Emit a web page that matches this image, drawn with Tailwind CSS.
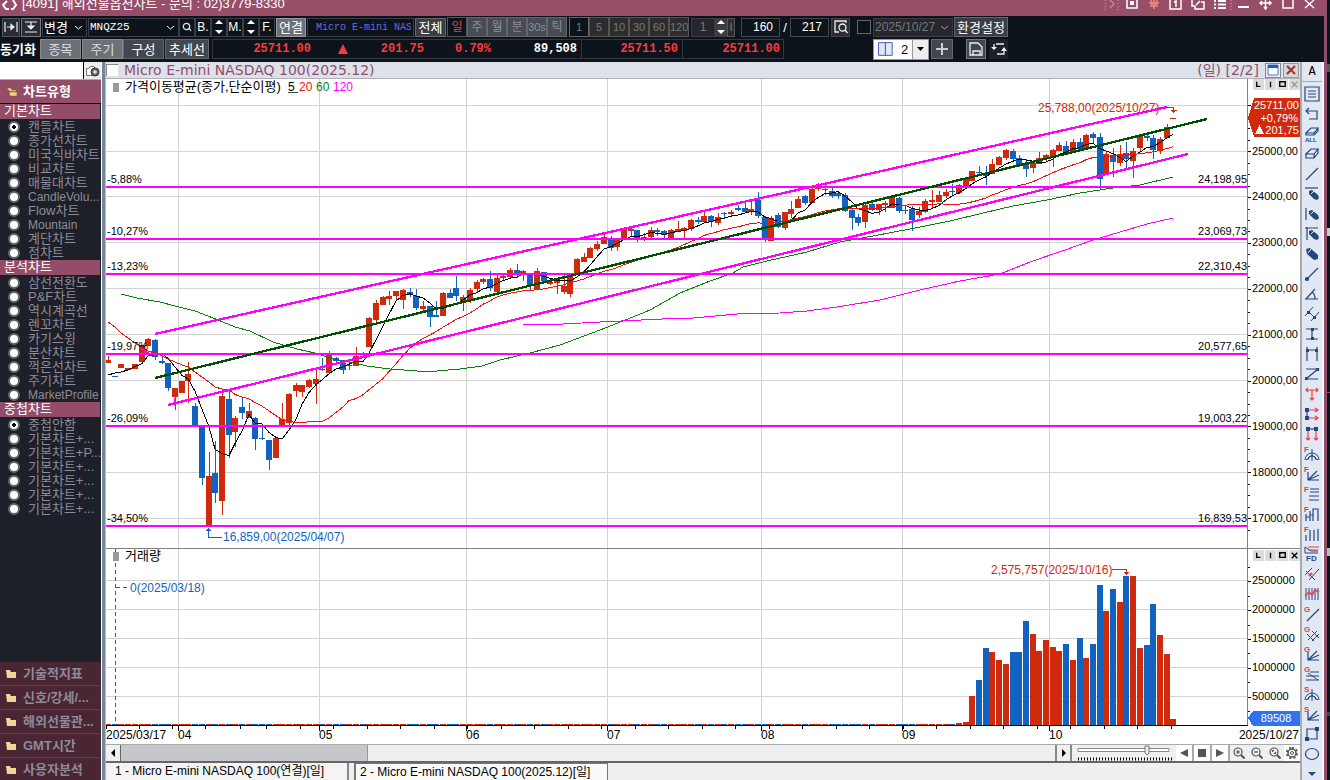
<!DOCTYPE html>
<html lang="ko">
<head>
  <meta charset="UTF-8" />
  <meta name="viewport" content="width=device-width, initial-scale=1.0"/>
  <title>[4091] 해외선물옵션차트</title>
  <script src="https://cdn.jsdelivr.net/npm/@tailwindcss/browser@4"></script>
</head>
<body class="h-screen flex overflow-hidden bg-[#12161d] text-[13px] font-['Liberation_Sans','Noto_Sans_CJK_KR',sans-serif]">

  <div class="flex-1 min-w-0 h-full flex flex-col border-r-3 border-[#8f4d69]">

    <!-- Title bar -->
    <header class="h-4 shrink-0 flex items-end justify-between bg-[#964e69] text-white overflow-hidden">
      <div class="flex items-end gap-1 pl-[2px]">
        <svg class="w-4 h-4" viewBox="0 0 16 16" fill="none" stroke="#fff" stroke-width="2"><path d="M5 1 1 5l3 4h3M11 0l3 5-3 4H9"/></svg>
        <h1 class="text-[13px] leading-4 h-5 whitespace-nowrap">[4091] 해외선물옵션차트 - 문의 : 02)3779-8330</h1>
      </div>
      <svg class="w-[220px] h-4" viewBox="0 0 220 16" fill="none" stroke="#fff" stroke-width="1.5">
        <path stroke="#b98a9b" stroke-dasharray="1 2" d="M1.500 0v12M14 0v12M127 0v12"/>
        <path stroke="#b98a9b" d="m6 0 4 4-4 4"/>
        <path d="M23 0v8h10V0M66 0v9h11V0M70 2l2-1v6M88 0v6h3v3h9V2h-3M92 5l4-4"/>
        <path fill="#fff" stroke="none" d="M26 1h4v4h-4z"/>
        <path stroke="#f08c78" d="M45 3h10M47 0l1 5M53 0l-1 5M50 0v9M46 6h8"/>
        <path stroke-width="2" d="M110 1h2M110 4.500h2M110 8h2M114 1h8M114 4.500h8M114 8h8M134 7h11"/>
        <path d="M156 3h11M161.500 0v9M158 1l-2 2 2 2M165 1l2 2-2 2M160 7l1.500 2 1.500-2M179 0v8h10V0M201 0l9 8M210 0l-9 8"/>
      </svg>
    </header>

    <!-- Toolbars -->
    <div class="h-[46px] shrink-0 bg-[#0d131b] text-white leading-none overflow-hidden whitespace-nowrap">
      <div class="flex items-center h-[21px] pl-[2px] pt-px">
        <button aria-label="간격" class="w-[18px] h-[19px] mr-px bg-[#2a2d36] border border-[#50535a] grid place-items-center"><svg class="w-3.5 h-3" viewBox="0 0 14 12" fill="none" stroke="#eee" stroke-width="1.200"><path d="M1 1v10M13 1v10M3 6h6"/><path fill="#eee" d="m7 3.500 3 2.500-3 2.500z"/></svg></button>
        <button aria-label="높이" class="w-5 h-[19px] mr-px bg-[#2a2d36] border border-[#777a80] grid place-items-center"><svg class="w-3.5 h-3" viewBox="0 0 14 12" fill="none" stroke="#eee" stroke-width="1.200"><path d="M1 1h12M1 11h12M7 1v5"/><path fill="#eee" d="m4 5 3 3 3-3z"/></svg></button>
        <div class="relative w-[45px] h-[19px] mr-px border border-[#3a3d44]">
          <select aria-label="변경" class="appearance-none w-full h-full pl-px outline-none bg-transparent"><option>변경</option></select>
          <svg class="absolute right-1 top-[7px] w-[7px] h-1" viewBox="0 0 7 4" fill="none" stroke="#fff"><path d="m0 0 3.500 3L7 0"/></svg>
        </div>
        <div class="relative w-[91px] h-[19px] border border-[#3a3d44]">
          <select aria-label="종목코드" class="appearance-none w-full h-full pl-px outline-none bg-transparent text-[11px] font-['Liberation_Mono',monospace]"><option>MNQZ25</option></select>
          <svg class="absolute right-1 top-[7px] w-[7px] h-1" viewBox="0 0 7 4" fill="none" stroke="#fff"><path d="m0 0 3.500 3L7 0"/></svg>
        </div>
        <button aria-label="종목 찾기" class="w-4 h-[19px] border border-[#3a3d44] grid place-items-center"><svg class="w-2.5 h-2.5" viewBox="0 0 10 10" fill="none" stroke="#ddd" stroke-width="1.300"><circle cx="4.500" cy="4.500" r="3.200"/><path d="m7 6 2 3"/></svg></button>
        <button class="w-4 h-[19px] border border-[#3a3d44] text-[12px]">B.</button>
        <button aria-label="B 변경" class="w-4 h-[19px] border border-[#3a3d44] grid place-items-center"><svg class="w-2 h-3.5" viewBox="0 0 8 14" fill="#fff"><path d="M0 4h8L4 0zM0 10h8l-4 4z"/></svg></button>
        <button class="w-4 h-[19px] border border-[#3a3d44] text-[12px]">M.</button>
        <button aria-label="M 변경" class="w-4 h-[19px] border border-[#3a3d44] grid place-items-center"><svg class="w-2 h-3.5" viewBox="0 0 8 14" fill="#fff"><path d="M0 4h8L4 0zM0 10h8l-4 4z"/></svg></button>
        <button class="w-4 h-[19px] mr-px border border-[#3a3d44] text-[12px]">F.</button>
        <button class="w-[30px] h-[19px] mr-px bg-[#6c7078] border border-[#999]">연결</button>
        <input aria-label="종목명" readonly value=" Micro E-mini NASDAQ" class="w-[107px] h-[19px] mr-px pl-[2px] pr-[2px] border border-[#3a3d44] text-[#7468dc] font-['Liberation_Mono',monospace] text-[10px]"/>
        <button class="w-[31px] h-[19px] mr-px bg-[#3a3d45] border border-[#666]">전체</button>
        <div class="flex mr-[2px] text-[#8c8e92] text-[12px]">
          <button class="w-5 h-5 border border-[#555] bg-[#0d131b] text-[#f43c3c]">일</button>
          <button class="w-5 h-5 border border-[#666] bg-[#474b53]">주</button>
          <button class="w-5 h-5 border border-[#666] bg-[#474b53]">월</button>
          <button class="w-5 h-5 border border-[#666] bg-[#474b53]">분</button>
          <button class="w-5 h-5 border border-[#666] bg-[#474b53] text-[11px]">30s</button>
          <button class="w-5 h-5 border border-[#666] bg-[#474b53]">틱</button>
        </div>
        <div class="flex mr-[2px] text-[#77797c] text-[11px]">
          <button class="w-5 h-5 border border-[#666] bg-[#0d131b]">1</button>
          <button class="w-5 h-5 border border-[#555] bg-[#2c2c2f]">5</button>
          <button class="w-5 h-5 border border-[#555] bg-[#2c2c2f]">10</button>
          <button class="w-5 h-5 border border-[#555] bg-[#2c2c2f]">30</button>
          <button class="w-5 h-5 border border-[#555] bg-[#2c2c2f]">60</button>
          <button class="w-5 h-5 border border-[#555] bg-[#2c2c2f]">120</button>
        </div>
        <input aria-label="틱 단위" disabled value="1" class="w-6 h-[19px] bg-[#26262b] border border-[#3a3d44] text-[#77797c] text-[12px] text-center"/>
        <button aria-label="단위 변경" class="w-3 h-[19px] bg-[#3c3d40] grid place-items-center"><svg class="w-2 h-3.5" viewBox="0 0 8 14" fill="#fff"><path d="M0 4h8L4 0zM0 10h8l-4 4z"/></svg></button>
        <button class="w-2 h-[19px] mr-[6px] bg-[#2c2c2f] border border-[#555] text-[#77797c] text-[11px]">I</button>
        <input aria-label="표시 봉수" value="160" class="w-[39px] h-[19px] pr-[6px] border border-[#44474d] text-[12px] text-right"/>
        <span class="w-[10px] text-center">/</span>
        <input aria-label="전체 봉수" value="217" class="w-[39px] h-[19px] mr-[2px] pr-[6px] border border-[#44474d] text-[12px] text-right"/>
        <button aria-label="데이터 조회" class="w-[19px] h-[19px] mr-[7px] bg-[#2a2d33] border border-[#444] grid place-items-center"><svg class="w-3.5 h-3.5" viewBox="0 0 14 14" fill="none" stroke="#eee" stroke-width="1.300"><path d="M12 3V1H1v11h4"/><circle cx="8.500" cy="7.500" r="3.500"/><path d="m11 10 2.500 3"/></svg></button>
        <input aria-label="날짜 지정" type="checkbox" class="appearance-none w-3.5 h-3.5 mr-[2px] border border-[#666]"/>
        <div class="relative w-20 h-[19px] mr-px bg-[#26262b] border border-[#3a3d44]">
          <select aria-label="기준일" disabled class="appearance-none w-full h-full pl-px text-[#77797c] text-[12px] opacity-100"><option>2025/10/27</option></select>
          <svg class="absolute right-1 top-[7px] w-[7px] h-1" viewBox="0 0 7 4" fill="none" stroke="#aaa"><path d="m0 0 3.500 3L7 0"/></svg>
        </div>
        <button class="w-[54px] h-5 bg-[#3a3d45] border border-[#666]">환경설정</button>
      </div>

      <div class="flex items-center h-[23px] pt-px">
        <span class="w-[40px] font-bold">동기화</span>
        <button class="w-[41px] h-5 mr-px bg-[#6c7078] border border-[#888] text-[#ddd]">종목</button>
        <button class="w-[41px] h-5 bg-[#6c7078] border border-[#888] text-[#ddd]">주기</button>
        <button class="w-[41px] h-5 mr-px bg-[#42464e] border border-[#666]">구성</button>
        <button class="w-11 h-5 mr-[3px] bg-[#42464e] border border-[#666]">추세선</button>
        <div class="flex w-[572px] mr-[89px] h-5 border border-[#34373d] items-center font-bold font-['Liberation_Mono',monospace] text-[12px] text-[#f83c3c]">
          <span class="w-[98px] text-right">25711.00</span>
          <svg class="w-2.5 h-2.5 ml-[27px]" viewBox="0 0 10 10" fill="#f83c3c"><path d="M5 0 10 10H0z"/></svg>
          <span class="w-[76px] text-right">201.75</span>
          <span class="w-[67px] text-right">0.79%</span>
          <span class="w-[91px] h-full pr-1 flex items-center justify-end border-r border-[#34373d] text-white">89,508</span>
          <span class="w-[101px] h-full pr-1 flex items-center justify-end border-r border-[#34373d]">25711.50</span>
          <span class="w-[100px] text-right pr-[3px]">25711.00</span>
        </div>
        <div class="flex w-14 h-[21px] mr-[2px] bg-white border border-[#999] text-black items-center">
          <svg class="w-[15px] h-3.5 mx-1" viewBox="0 0 15 14"><path d="M.5.5h14v13H.5z" fill="#dfe9f3" stroke="#5c50c8"/><path d="M7.500 0v14" stroke="#1263c0"/></svg>
          <span class="w-4 text-center">2</span>
          <button aria-label="분할 선택" class="w-4 h-full bg-[#eee] border-l border-[#999] grid place-items-center"><svg class="w-[7px] h-1" viewBox="0 0 7 4"><path d="M0 0h7L3.500 4z"/></svg></button>
        </div>
        <button aria-label="추가" class="w-[22px] h-5 mr-[13px] bg-[#42464e] border border-[#666] grid place-items-center"><svg class="w-3 h-3" viewBox="0 0 12 12" stroke="#ccc" stroke-width="2"><path d="M6 0v12M0 6h12"/></svg></button>
        <button aria-label="저장" class="w-5 h-5 mr-[3px] bg-[#42464e] border border-[#777] grid place-items-center"><svg class="w-3.5 h-3.5" viewBox="0 0 14 14" fill="none" stroke="#eee" stroke-width="1.300"><path d="M1 1h8l4 4v8H1zM4 13V9h7v4"/></svg></button>
        <button aria-label="새로고침" class="w-[19px] h-5 bg-[#1c1f27] grid place-items-center"><svg class="w-4 h-3" viewBox="0 0 16 12" fill="none" stroke="#eee" stroke-width="1.300"><path d="M5 1h8M3 1v4M13 7v4H6"/><path fill="#eee" stroke="none" d="M0 4h6L3 7zM10 8h6l-3-4z"/></svg></button>
      </div>
    </div>

    <div class="flex-1 min-h-0 flex">

      <!-- Chart types -->
      <aside class="w-[101px] shrink-0 flex flex-col bg-[#1d2028] text-[#8d8b99] whitespace-nowrap overflow-hidden">
        <div class="flex h-[18px] shrink-0 border-b border-[#aaa]">
          <input aria-label="검색" class="w-[83px] h-[17px] bg-white"/>
          <button aria-label="화면 저장" class="flex-1 border-l border-black bg-[#ececec] grid place-items-center"><svg class="w-3.5 h-3" viewBox="0 0 14 12" fill="#fff" stroke="#777"><path d="M.5 3.500H3l1-2h4l1 2h2v7H.5z"/><circle cx="9" cy="7" r="4" fill="#666" stroke="#333"/><path stroke="#fff" d="M9 5v4M7 7h4"/></svg></button>
        </div>
        <button class="flex items-center h-[23px] shrink-0 pl-[7px] gap-[6px] bg-[#934d69] text-white font-bold"><svg class="w-2.5 h-2.5" viewBox="0 0 10 10" fill="#f5d08e" stroke="#7a5a30" stroke-width=".5"><path d="M0 1h4l1 2h4v2L2 4zM2 5h8v4H3z"/></svg>차트유형</button>
        <div id="groups" class="flex-1 border-t border-black"></div>
        <nav id="folders" class="shrink-0 -mb-[2px] font-bold"></nav>
      </aside>

      <div class="w-[5px] shrink-0 bg-[#74879a] border-l border-r border-l-white border-r-[#bbb]"></div>

      <!-- Chart window -->
      <main class="flex-1 min-w-0 flex flex-col bg-white">
        <div class="h-[17px] shrink-0 flex items-center bg-[#dde2ea] border-b border-[#aeb1b5] text-[#934d69] text-[14px] font-['DejaVu_Sans','Noto_Sans_CJK_KR',sans-serif] whitespace-nowrap leading-none">
          <input aria-label="차트 선택" type="checkbox" class="appearance-none w-3 h-3 mr-[6px] bg-white border-t border-l border-[#888]"/>
          <h2 class="flex-1">Micro E-mini NASDAQ 100(2025.12)</h2>
          <span class="mr-[6px]">(일) [2/2]</span>
          <button aria-label="최대화" class="w-4 h-[15px] mr-[2px] border border-[#888] bg-[#eee] grid place-items-center"><svg class="w-3 h-3" viewBox="0 0 12 12"><path d="M1 1h10v10H1z" fill="#fff" stroke="#5c6bd8"/><path d="M1 1h10v3H1z" fill="#1263c0"/></svg></button>
          <button aria-label="닫기" class="w-4 h-[15px] mr-px border border-[#999] bg-[#d4d6da] grid place-items-center"><svg class="w-2.5 h-2.5" viewBox="0 0 10 10" stroke="#a03030" stroke-width="2"><path d="m1 1 8 8M9 1 1 9"/></svg></button>
        </div>

        <div class="relative flex-1 min-h-0">
          <svg id="chart" class="block w-full h-full" viewBox="106 79 1194 665" preserveAspectRatio="xMinYMin meet" font-size="12"></svg>
          <div class="absolute top-0 right-0 flex gap-px pane"></div>
          <div class="absolute top-[471px] right-0 flex gap-px pane"></div>
        </div>

        <div class="h-[19px] shrink-0 flex items-center border-t border-b-2 border-t-[#aaa] border-b-[#666] bg-[#efefef]">
          <button aria-label="왼쪽으로" class="w-[15px] h-full grid place-items-center border-r border-[#666]"><svg class="w-1 h-2" viewBox="0 0 4 8"><path d="M4 0v8L0 4z"/></svg></button>
          <div class="flex-1 h-full flex"><div class="w-[247px] bg-[#c5c7ca] border-r border-[#999]"></div></div>
          <button aria-label="오른쪽으로" class="w-[17px] h-full grid place-items-center border-l-2 border-r-2 border-[#888]"><svg class="w-1 h-2" viewBox="0 0 4 8"><path d="M0 0v8l4-4z"/></svg></button>
          <svg class="w-[104px] h-4" viewBox="0 0 104 16"><path d="M6 3.500h91v3H6z" fill="#fff" stroke="#888"/><path d="M73 1h4v7l-2 2-2-2z" fill="#eee" stroke="#777"/><path d="M6 14h94" stroke="#000" stroke-width="3" stroke-dasharray="1 2"/></svg>
          <button aria-label="이전" class="w-[18px] h-full bg-white border-r-2 border-[#aaa] grid place-items-center"><svg class="w-2 h-2" viewBox="0 0 8 8" fill="#555"><path d="M8 0v8L0 4z"/></svg></button>
          <button aria-label="정지" class="w-[18px] h-full bg-white border-r-2 border-[#aaa] grid place-items-center"><svg class="w-2 h-2" viewBox="0 0 8 8" fill="#555"><path d="M0 0h8v8H0z"/></svg></button>
          <button aria-label="재생" class="w-[18px] h-full bg-white border-r-2 border-[#aaa] grid place-items-center"><svg class="w-2 h-2" viewBox="0 0 8 8" fill="#555"><path d="M0 0v8l8-4z"/></svg></button>
          <button aria-label="확대" class="w-[18px] h-full grid place-items-center"><svg class="w-3 h-3" viewBox="0 0 12 12" fill="none" stroke="#555" stroke-width="1.200"><circle cx="5" cy="5" r="4"/><path d="M5 3v4M3 5h4"/><path stroke-width="2" d="m8 8 3.500 3.500"/></svg></button>
          <button aria-label="축소" class="w-[18px] h-full grid place-items-center"><svg class="w-3 h-3" viewBox="0 0 12 12" fill="none" stroke="#555" stroke-width="1.200"><circle cx="5" cy="5" r="4"/><path d="M3 5h4"/><path stroke-width="2" d="m8 8 3.500 3.500"/></svg></button>
          <button aria-label="영역 확대" class="w-[18px] h-full grid place-items-center"><svg class="w-3 h-3" viewBox="0 0 12 12" fill="none" stroke="#555" stroke-width="1.200"><circle cx="5" cy="5" r="4"/><path d="M3.500 5V3.500H5M6.500 5v1.500H5"/><path stroke-width="2" d="m8 8 3.500 3.500"/></svg></button>
          <button aria-label="설정" class="w-4 h-full bg-white grid place-items-center"><svg class="w-3 h-3" viewBox="0 0 12 12" fill="none" stroke="#555"><circle cx="6" cy="6" r="4" stroke-width="1.500"/><circle cx="6" cy="6" r="1.500"/><path stroke-width="2" stroke-dasharray="2 2.200" d="M6 .8a5.200 5.200 0 1 1-.01 0"/></svg></button>
        </div>

        <div class="h-[17px] shrink-0 flex gap-[5px] pl-[2px] bg-[#efefef] text-[12px] leading-[17px] whitespace-nowrap">
          <button class="w-[241px] pl-[7px] text-left bg-[#f4f4f4] border-r-2 border-[#888]">1 - Micro E-mini NASDAQ 100(연결)[일]</button>
          <button class="w-[254px] pl-[4px] text-left bg-[#fafafa] border-l-2 border-t border-r border-[#777]">2 - Micro E-mini NASDAQ 100(2025.12)[일]</button>
        </div>
      </main>

      <!-- Drawing tools -->
      <div class="w-6 shrink-0 flex flex-col bg-[#e1e7f3] border-l-2 border-r-2 border-l-[#aaa] border-r-[#f4f6fa] overflow-hidden">
        <button class="h-5 shrink-0 border-b border-[#aaa] text-[12px] font-['Liberation_Mono',monospace]">A</button>
        <div id="tools" class="pt-[2px]"></div>
      </div>
    </div>
  </div>

  <!-- Neighbouring window edge -->
  <div class="w-[3px] flex flex-col justify-between py-16 bg-[#0e131b]">
    <i class="block h-2 bg-[#555]"></i><i class="block h-2 bg-[#ccc]"></i><i class="block h-px bg-[#964e69]"></i><i class="block h-2 bg-[#bbb]"></i><i class="block h-1 bg-[#444]"></i>
  </div>

  <script>
    // sidebar
    const groups = [
      ['기본차트', ['캔들차트', '종가선차트', '미국식바차트', '비교차트', '매물대차트', 'CandleVolu...', 'Flow차트', 'Mountain', '계단차트', '점차트']],
      ['분석차트', ['삼선전환도', 'P&amp;F차트', '역시계곡선', '렌꼬차트', '카기스윙', '분산차트', '꺽은선차트', '주기차트', 'MarketProfile']],
      ['중첩차트', ['중첩안함', '기본차트+...', '기본차트+P...', '기본차트+...', '기본차트+...', '기본차트+...', '기본차트+...']]
    ];
    document.getElementById('groups').innerHTML = groups.map(([name, items], g) => `
      <h3 class="h-[15px] mb-px pl-1 bg-[#934d69] text-white leading-[14px] w-[100px]">${name}</h3>
      ${items.map((t, i) => `<label class="flex items-center h-3.5 pl-2 gap-[8px] leading-[14px] ${/^[A-Za-z.]+$/.test(t) ? 'text-[12px]' : 'text-[13px]'}">
        <input type="radio" name="g${g}" ${i === 0 && g !== 1 ? 'checked' : ''} class="appearance-none shrink-0 w-3 h-3 rounded-full border-2 border-[#62666a] bg-white checked:bg-[radial-gradient(circle,#000_2px,#fff_2px)]"/>${t}</label>`).join('')}`).join('');

    document.getElementById('folders').innerHTML = ['기술적지표', '신호/강세/...', '해외선물관...', 'GMT시간', '사용자분석'].map(t => `
      <button class="flex items-center w-full h-6 pl-[6px] gap-[7px] bg-[#4a2533] border-b border-[#55464d]">
        <svg class="w-2.5 h-2.5" viewBox="0 0 10 10" fill="#f5d596"><path d="M0 1h4l1 2h5v6H1z"/></svg>${t}</button>`).join('');

    document.querySelectorAll('.pane').forEach((p, n) => {
      const c = n ? '#000' : '#999';
      p.innerHTML = [['L', '<path d="M4 3v5h4"/>'], ['I', '<path d="M6 3v6"/>'], ['창', '<path d="M3 3h6v5H3z"/>'], ['닫기', `<path stroke="${c}" d="m3 3 6 6M9 3 3 9"/>`]]
        .map(([l, d]) => `<button aria-label="${l}" class="w-[11px] h-[11px] bg-[#dcdcdc]"><svg class="w-[11px] h-[11px]" viewBox="0 0 12 12" fill="none" stroke="#000" stroke-width="1.5">${d}</svg></button>`).join('');
    });

    // chart
    const UP = '#cf2a0c', DOWN = '#1263c0', MG = '#ff00ff', RIGHT = 1247;
    // up, wick top, body top, body bottom, wick bottom
    const bars = [
      [1,356,360,363,363],[0,376,376,377,377],[1,364,364,368,368],[1,368,368,370,370],[1,364,364,369,369],
      [1,345,345,362,362],[1,338,339,346,346],[0,339,340,357,360],[0,355,361,363,364],[0,363,363,388,391],
      [1,388,388,397,410],[1,381,381,393,393],[1,362,374,381,403],[0,403,406,425,425],[0,425,425,478,485],
      [1,452,476,526,526],[0,441,473,493,503],[1,393,396,501,515],[0,391,399,435,458],[1,416,418,432,447],
      [0,398,407,413,419],[1,403,411,418,418],[0,417,418,439,450],[0,426,438,439,440],[0,440,440,460,470],
      [1,438,438,458,458],[1,403,419,426,426],[1,393,394,423,425],[1,383,385,391,397],[1,385,385,392,397],
      [1,379,380,387,388],[1,369,379,384,404],[0,358,369,370,371],[1,351,355,373,373],[0,357,358,361,364],
      [0,362,363,370,374],[1,362,365,366,370],[1,347,356,366,366],[0,352,356,357,358],[1,317,318,347,347],
      [1,300,303,320,323],[1,296,297,305,305],[1,291,296,299,305],[1,291,291,296,300],[1,289,290,300,309],
      [0,288,292,295,297],[0,289,296,308,310],[1,301,306,309,312],[0,306,306,317,327],[0,301,315,317,317],
      [1,292,293,316,316],[0,289,293,298,298],[0,276,288,296,301],[1,295,297,302,311],[1,288,290,300,303],
      [1,280,282,289,293],[1,278,279,282,284],[0,271,279,288,291],[1,273,278,292,292],[1,274,276,278,280],
      [1,268,270,277,279],[0,264,270,273,278],[1,270,271,274,281],[0,274,275,286,291],[1,268,271,290,290],
      [0,272,272,281,281],[1,278,282,284,285],[1,278,281,283,294],[1,275,286,292,294],[1,275,276,294,297],
      [1,258,259,274,274],[1,253,257,262,262],[1,247,248,258,258],[1,241,244,249,251],[1,233,237,244,244],
      [0,236,238,248,251],[1,239,240,247,251],[1,227,229,239,239],[1,228,229,231,237],[0,230,230,238,242],
      [1,233,237,238,241],[1,227,230,237,238],[0,228,230,232,236],[0,230,231,235,238],[1,229,230,238,240],
      [1,221,229,231,232],[1,227,228,231,238],[1,219,220,229,231],[0,217,220,222,224],[1,211,216,222,222],
      [0,215,216,222,227],[1,213,217,223,225],[0,212,213,214,218],[1,210,212,214,216],[0,205,208,210,211],
      [0,202,208,212,212],[1,200,209,212,215],[0,192,200,216,218],[0,216,217,238,242],[1,216,218,241,241],
      [0,213,215,227,228],[1,212,212,228,230],[1,201,209,214,218],[1,196,199,208,208],[0,195,196,203,205],
      [1,187,189,203,203],[1,183,188,189,191],[1,185,189,190,195],[0,188,191,196,198],[0,191,193,196,199],
      [0,193,195,211,212],[0,209,210,218,230],[0,214,217,223,226],[1,203,205,222,228],[0,202,204,210,211],
      [1,204,204,210,215],[1,201,203,205,212],[1,195,197,208,208],[0,197,198,211,213],[0,205,210,211,214],
      [0,206,209,220,231],[1,207,211,215,218],[1,199,201,212,213],[1,190,200,202,209],[1,191,195,202,202],
      [1,189,192,196,198],[0,184,191,192,196],[1,184,185,193,194],[1,178,179,186,186],[1,171,171,181,181],
      [0,166,172,173,175],[0,166,173,176,185],[1,159,164,174,174],[1,156,157,165,165],[1,149,150,158,160],
      [0,149,151,159,160],[0,155,158,165,167],[0,159,163,169,177],[1,160,163,168,173],[1,152,158,164,164],
      [1,154,155,158,162],[1,149,150,158,167],[1,142,145,151,151],[0,141,146,152,152],[1,139,142,152,152],
      [0,138,142,149,149],[1,134,135,148,148],[0,132,134,138,143],[0,133,137,179,189],[1,152,154,175,175],
      [0,148,155,162,177],[1,145,154,163,166],[0,142,153,159,168],[1,148,151,161,178],[1,135,135,148,152],
      [0,134,136,138,141],[0,135,138,150,159],[1,137,139,151,154],[1,124,127,138,138],[1,118,118,119,119]
    ];
    // top of each volume bar, from bar 127 on; the earlier ones are flat
    const volTop = [723,722,696,680,648,652,660,664,652,652,621,634,651,640,647,651,644,660,638,658,644,585,611,589,602,576,576,648,645,604,635,654,719];

    const X = i => Math.round(108 + 6.7 * i);
    const close = bars.map(b => b[0] ? b[2] : b[3]);
    // head: values whose window reaches back before the first visible bar
    const ma = (n, head) => close.map((_, i) => {
      const y = i < head.length ? head[i] : close.slice(i - n + 1, i + 1).reduce((a, b) => a + b) / n;
      return X(i) + ',' + y.toFixed(1);
    }).join(' ');

    const line = (x1, y1, x2, y2, c, w = 1) => `<path d="M${x1} ${y1}L${x2} ${y2}" stroke="${c}" stroke-width="${w}"/>`;
    const rect = (x, y, w, h, c) => `<rect x="${x}" y="${y}" width="${w}" height="${h}" fill="${c}"/>`;
    const text = (x, y, t, c = '#000', a = 'start', size = 12) => `<text x="${x}" y="${y}" fill="${c}" text-anchor="${a}" font-size="${size}">${t}</text>`;
    const poly = (pts, c) => `<polyline points="${pts}" fill="none" stroke="${c}"/>`;

    const months = [[178, '04'], [319, '05'], [466, '06'], [607, '07'], [761, '08'], [902, '09'], [1049, '10']];
    const priceY = [105, 151, 196, 242, 288, 334, 380, 426, 472, 518];
    let s = '<g shape-rendering="crispEdges">';
    months.forEach(([x]) => { s += rect(x, 79, 1, 646, '#d3d3d3'); });
    priceY.forEach(y => { s += rect(106, y, 1141, 1, '#d3d3d3'); });
    [580, 609, 638, 667, 696].forEach(y => { s += rect(106, y, 1141, 1, '#d3d3d3'); });

    s += `<path d="M115.5 549V725" stroke="${DOWN}" stroke-dasharray="4 3"/>`;
    bars.forEach(([up, wt, bt, bb, wb], i) => {
      const x = X(i), c = up ? UP : DOWN, v = i < 127 ? 724 : volTop[i - 127];
      s += rect(x, wt, 1, wb - wt, c) + rect(x - 3, bt, 6, bb - bt, c) + rect(x - 3, v, 6, 725 - v, c);
    });
    s += poly(ma(5, [375, 373, 372, 370]), '#000');
    s += poly(ma(20, [322,327,333,338,343,347,351,353,356,359,362,365,367,372,377,382,387,389,390]), '#f01010');
    s += poly('121,294 137,298 160,302 175,306 195,311 208,316 223,322 235,327 250,331 273,342 297,349 315,353 333,359 350,362 367,366 390,369 417,371 437,371 460,369 482,366 500,360 530,353 560,345 600,330 628,319 650,310 680,293 710,281 733,273 743,267 767,261 807,252 840,242 873,236 910,229 950,221 983,213 1013,206 1047,200 1080,193 1113,188 1140,185 1173,177', '#0c800c');
    s += poly('523,324 545,325 600,322 662,319 693,318 737,314 780,313 807,311 837,307 880,300 920,290 960,281 1000,274 1030,262 1065,250 1090,241 1120,232 1147,224 1173,218', MG);

    [[187, '-5,88%', '24,198,95'], [239, '-10,27%', '23,069,73'], [274, '-13,23%', '22,310,43'], [354, '-19,97%', '20,577,65'], [426, '-26,09%', '19,003,22'], [526, '-34,50%', '16,839,53']].forEach(([y, l, r]) => {
      s += rect(106, y - 1, 1141, 2, MG) + text(107, y - 4, l, '#000', 'start', 11) + text(RIGHT, y - 4, r, '#000', 'end', 11);
    });
    s += line(155, 334, 1167, 107, MG, 2.3) + line(155, 378, 1207, 119, '#005000', 2.3) + line(168, 405, 1188, 154, MG, 2.3);
    s += line(141, 348, 149, 354, MG, 2) + line(175, 398, 175, 405, MG, 2);

    // axes
    s += rect(RIGHT, 79, 1, 646, '#808080') + rect(106, 548, 1194, 1, '#808080') + rect(106, 725, 1142, 1, '#000');
    for (let i = 0; i < 38; i++) s += rect(1248, Math.round(105.3 + 11.47 * i), i % 4 ? 2 : 3, 1, '#000');
    for (let i = 0; i < 11; i++) s += rect(1248, Math.round(567 + 14.4 * i), i % 2 ? 3 : 2, 1, '#000');
    [106, 139, 172, 205, 240, 266, 300, 333].concat(Array.from({ length: 25 }, (_, i) => Math.round(366.6 + 33.5 * i))).forEach(x => { s += rect(x, 726, 1, 3, '#000'); });
    s += text(106, 739, '2025/03/17') + text(1299, 739, '2025/10/27', '#000', 'end');
    months.forEach(([x, t]) => { s += rect(x, 726, 1, 5, '#000') + text(x, 739, t); });
    priceY.slice(1).forEach((y, i) => { s += text(1252, y + 4, (25 - i) + '000,00', '#000', 'start', 11); });
    [2500000, 2000000, 1500000, 1000000, 500000].forEach((v, i) => { s += text(1252, 584 + 29 * i, v, '#000', 'start', 11); });

    // tags and notes
    s += `<path d="M1248 118 1254 98H1300V137H1254z" fill="${UP}"/>` + text(1299, 109, '25711,00', '#fff', 'end', 11) + text(1298, 122, '+0,79%', '#fff', 'end', 11) + text(1299, 134, '201,75', '#fff', 'end', 11) + '<path d="M1255 134h9l-4.500-9z" fill="#fff"/>';
    s += '<path d="M1248 718 1253 711H1300V726H1253z" fill="#2f74ee"/>' + text(1276, 722, '89508', '#fff', 'middle', 11);
    s += text(1038, 112, '25,788,00(2025/10/27)', UP) + `<path d="M1160 107.500H1173.500V113M1171 110.500h6M1170 118.500h6" fill="none" stroke="${UP}"/><path d="M1171 110h5l-2.500 3z" fill="${UP}"/>`;
    s += text(223, 541, '16,859,00(2025/04/07)', DOWN) + `<path d="M222 537.500H208.500V528M206 530.500h5" fill="none" stroke="${DOWN}"/><path d="M206 531h5l-2.500-3z" fill="${DOWN}"/>`;
    s += text(991, 574, '2,575,757(2025/10/16)', UP) + `<path d="M1112 569.500H1126.500V575M1124 572.500h5" fill="none" stroke="${UP}"/><path d="M1124 572h5l-2.500 3z" fill="${UP}"/>`;
    s += text(130, 592, '0(2025/03/18)', DOWN) + `<path d="M116 587.500h13" stroke="${DOWN}" stroke-dasharray="4 3"/>`;
    s += rect(113, 83, 6, 9, '#999') + rect(113, 552, 6, 9, '#999');
    s += text(125, 91, '가격이동평균(종가,단순이평)', '#000', 'start', 13) + text(125, 560, '거래량', '#000', 'start', 13);
    s += text(288, 91, '5') + rect(288, 92, 10, 1, '#444') + text(299, 91, '20', '#f01010') + text(316, 91, '60', '#0c800c') + text(333, 91, '120', MG) + '</g>';
    document.getElementById('chart').innerHTML = s;

    // drawing tools
    const R = 'stroke="#f03c3c"', F = 'fill="#24487c"';
    const L = t => `<text x="0" y="6" font-size="8" font-weight="bold" fill="#f03c3c" stroke="none">${t}</text>`;
    const pen = '<path fill="#24487c" stroke="none" d="m5 5 3-1 6 5 1 3-2 2-3-1-5-5z"/><path stroke="#e1e7f3" stroke-width="1" d="m7 8 3-3"/>';
    const fan = '<path stroke-width="1" d="M1 14a7 7 0 0 1 14 0M4 14a4 4 0 0 1 8 0M8 3v12M8 9l-6 5M8 9l6 5"/>';
    const rays = '<path d="M4 6v8h11M4 14l9-9M4 14l11-5"/>';
    const tools = [
      ['목록', '<path d="M1 1h14v14H1zM4 5h8M4 8h8M4 11h8"/>'],
      ['되돌리기', '<path d="M2 5h11v8H5M5 2 2 5l3 3"/>'],
      ['전체 지우기', `<path d="m2 7 5-5h7l-4 5zM2 7v2h8l4-4V2M10 7v2"/><text x="1" y="16" font-size="6" font-weight="bold" ${F} stroke="none">ALL</text>`],
      ['지우개', '<path d="m2 8 5-5h7l-4 5zM2 8v4h8l4-5V3M10 8v4"/>'],
      ['추세선', '<path d="M2 14 14 2"/>'],
      ['수평선', '<path d="M1 2h13"/>' + pen],
      ['수직선', '<path d="M2 2v12"/>' + pen],
      ['십자선', '<path d="M1 2h13M3 1v13"/>' + pen],
      ['펜', `<path ${F} stroke="none" d="m2 3 4-1 8 7v4l-4 1-7-6z"/><path stroke="#e1e7f3" stroke-width="1" d="m4 7 3-4"/>`],
      ['반직선', `<path d="M3 13 14 2"/><circle cx="3" cy="13" r="1.500" ${F}/>`],
      ['각도선', '<path d="M1 13h13M2 13 11 3M8 6q3 2 3 7"/>'],
      ['평행선', `<path stroke-width="1" d="M1 10 9 1M7 15l8-9M5 6l5 5"/><path ${F} stroke="none" d="M3 5h3v3H3zM9 10h3v3H9z"/>`],
      ['수평구간', `<path d="M2 3h12M2 13h12M8 3v10"/><path ${F} stroke="none" d="M7 2h3v3H7zM7 11h3v3H7z"/>`],
      ['수직구간', `<path d="M3 1v14M13 1v14M3 4h10"/><path ${F} stroke="none" d="M2 3h3v3H2zM11 3h3v3h-3z"/>`],
      ['지그재그', `<path d="M2 3h12L2 13h12"/><path ${F} stroke="none" d="M12 2h3v3h-3zM1 11h3v3H1z"/>`],
      ['T선', `<path ${R} d="M2 4h12M8 4v10M4 2 2 4l2 2M12 2l2 2-2 2M6 12l2 2 2-2"/>`],
      ['가로 확장', `<path d="M3 2v12"/><path ${R} d="M3 4h11M3 12h11M11 2l3 2-3 2M11 10l3 2-3 2"/><path ${F} stroke="none" d="M1 2h4v4H1zM1 10h4v4H1z"/>`],
      ['세로 확장', `<path d="M2 3h12"/><path ${R} d="M4 3v11M12 3v11M2 12l2 2 2-2M10 12l2 2 2-2"/><path ${F} stroke="none" d="M2 1h4v4H2zM10 1h4v4h-4z"/>`],
      ['피보나치 아크', fan + L('F')],
      ['피보나치 팬', rays + L('F')],
      ['피보나치 되돌림', '<path d="M6 3h9M6 6h9M5 10h10M5 14h10"/>' + L('F')],
      ['피보나치 목표', '<path d="M2 15V8M6 15V5M2 11h4M6 9h3M9 15V3h5v12"/>' + L('F')],
      ['피보나치 시간대', '<path d="M2 15V9M6 15V4M10 15V4M14 15V3"/>' + L('F')],
      ['피보나치 FD', `<path stroke-width="1" d="M1 1v6h13M1 1l6 4h7"/><path ${R} stroke-width="1" d="M4 1h11M4 4h10"/><text x="2" y="15" font-size="8" font-weight="bold" ${F} stroke="none">FD</text>`],
      ['평행 채널', `<path stroke-width="1" d="M1 9 8 2M5 14l10-11M2 5l9 9"/><path ${R} stroke-width="2" d="m5 10 3-3"/>`],
      ['사이클', `<path stroke-width="1" d="M2 2v12M5 2v12M8 2v12M11 2v12M14 2v12"/><path ${R} stroke-width="1.500" d="m1 10 4-4 3 3 3-5 4 2"/>`],
      ['갠 라인', '<path d="M3 15 15 3"/>' + L('G')],
      ['갠 그리드', '<path stroke-width="1" d="m4 14 9-9M8 15l7-7M3 8l7 7M8 5l7 7"/>' + L('G')],
      ['갠 팬', rays + L('G')],
      ['갠 되돌림', '<path stroke-width="1" d="M6 6h9M2 10h13M2 14h13M4 7l10 7"/>' + L('G')],
      ['속도 아크', fan + L('S')],
      ['속도 팬', rays + L('S')],
      ['사각형', `<path d="M3 3h10v10H3z"/><path ${F} stroke="none" d="M11 1h4v4h-4zM1 11h4v4H1z"/>`],
      ['타원', '<ellipse cx="8" cy="8" rx="6.500" ry="5.500"/>'],
      ['더보기', `<path ${F} stroke="none" d="M4 6h8l-4 4z"/>`]
    ];
    document.getElementById('tools').innerHTML = tools.map(([l, d]) => `<button aria-label="${l}" class="w-full h-5 grid place-items-center"><svg class="w-4 h-4" viewBox="0 0 16 16" fill="none" stroke="#24487c" stroke-width="1.2">${d}</svg></button>`).join('');
  </script>
</body>
</html>
